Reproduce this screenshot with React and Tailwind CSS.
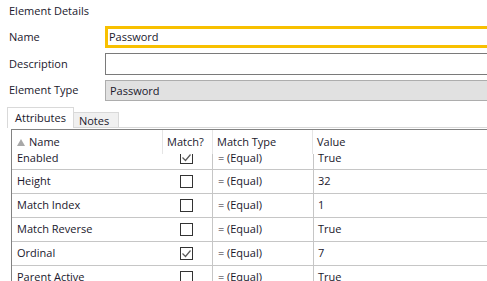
import React from 'react';

const rows = [
  { name: 'Enabled', match: true, value: 'True' },
  { name: 'Height', match: false, value: '32' },
  { name: 'Match Index', match: false, value: '1' },
  { name: 'Match Reverse', match: false, value: 'True' },
  { name: 'Ordinal', match: true, value: '7' },
  { name: 'Parent Active', match: false, value: 'True' },
];

const Checkbox = ({ checked, className = '' }) => (
  <span className={`w-[13px] h-[13px] border border-[#333333] bg-white flex items-center justify-center ${className}`}>
    {checked && (
      <svg width="11" height="11" viewBox="0 0 11 11">
        <path d="M1.5 5.5 L4.5 8.5 L9.5 2.5" fill="none" stroke="#5a5a5a" strokeWidth="1.2" />
      </svg>
    )}
  </span>
);

const FieldRow = ({ label, children, className }) => (
  <div className={`flex items-center ${className}`}>
    <div className="w-[105px] pl-[9px] shrink-0">{label}</div>
    {children}
  </div>
);

const App = () => {
  return (
    <div className="w-[487px] h-[281px] overflow-hidden bg-white font-['Open_Sans',sans-serif] text-[11px] text-[#1a182c]">
      <div className="h-[26px] pl-[9px] leading-[22px]">Element Details</div>

      <FieldRow label="Name" className="h-[22px]">
        <div className="w-[400px] shrink-0 h-[22px] border-[3px] border-[#f8c000] pl-[1px] leading-[16px]">Password</div>
      </FieldRow>

      <FieldRow label="Description" className="h-[22px] mt-[5px]">
        <div className="w-[400px] shrink-0 h-[22px] border border-[#7a7a7a]" />
      </FieldRow>

      <FieldRow label="Element Type" className="h-[21px] mt-[5px]">
        <div className="w-[400px] shrink-0 h-[21px] border border-[#adadad] bg-[#e1e1e1] pl-[4px] leading-[19px]">Password</div>
      </FieldRow>

      {/* tabs */}
      <div className="flex items-end h-[21px] mt-[6px] pl-[7px]">
        <div className="h-[21px] px-[7px] border border-b-0 border-[#d9d9d9] bg-white leading-[19px]">Attributes</div>
        <div className="h-[16px] w-[45px] pl-[5px] border-t border-r border-b border-[#d9d9d9] bg-[#f0f0f0] leading-[16px]">Notes</div>
        <div className="flex-1 h-[16px] border-b border-[#d9d9d9]" />
      </div>
      <div className="h-[1px]" />

      {/* grid */}
      <div className="ml-[11px] border-t border-l border-[#828282]">
        <div className="flex h-[24px] items-center">
          <div className="w-[150px] flex items-center pl-[5px] gap-[4px]">
            <svg width="8" height="7" viewBox="0 0 8 7">
              <path d="M4 0 L8 7 L0 7 Z" fill="#a8a8a8" />
            </svg>
            <span>Name</span>
          </div>
          <div className="w-[50px] h-full border-l border-[#e5e5e5] pl-[4px] flex items-center">Match?</div>
          <div className="w-[100px] h-full border-l border-[#e5e5e5] pl-[4px] flex items-center">Match Type</div>
          <div className="flex-1 h-full border-l border-[#e5e5e5] pl-[4px] flex items-center">Value</div>
        </div>
        <div className="overflow-hidden">
          <div className="-mt-[6px]">
            {rows.map((r, i) => (
              <div key={r.name} className={`flex border-b border-[#c6c6c6] ${i === 0 ? 'h-[22px]' : 'h-[24px]'}`}>
                <div className="w-[168px] pl-[5px] flex items-center">{r.name}</div>
                <div className="w-[32px] flex items-center">
                  <Checkbox checked={r.match} className={i === 0 ? '-mt-[3px]' : ''} />
                </div>
                <div className="w-[101px] border-l border-[#c6c6c6] pl-[5px] flex items-center">
                  <span className="w-[9px]">=</span>
                  <span>(Equal)</span>
                </div>
                <div className="flex-1 border-l border-[#c6c6c6] pl-[4px] flex items-center">{r.value}</div>
              </div>
            ))}
          </div>
        </div>
      </div>
    </div>
  );
};

export default App;
